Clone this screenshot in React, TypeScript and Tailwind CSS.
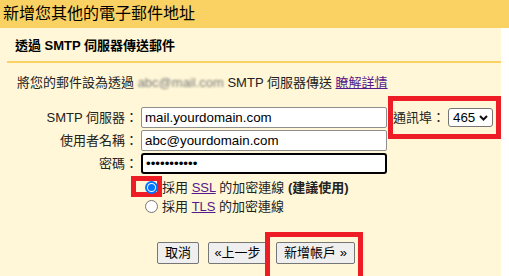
import React from "react";

const font = { fontFamily: '"Liberation Sans", Arial, "Noto Sans CJK TC", sans-serif' };

function Field({ label, value, type = "text", focused = false }: { label: string; value: string; type?: string; focused?: boolean }) {
  return (
    <>
      <div className="h-[21px] flex items-center justify-end text-[13px] text-[#222] pr-[0px]">{label}</div>
      <input
        type={type}
        readOnly
        defaultValue={value}
        className={
          "h-[21px] w-[246px] bg-white px-[3px] text-[13.33px] text-black outline-none " +
          (focused ? "border-2 border-black rounded-[3px]" : "border border-[#8f8f8f] rounded-[2px]")
        }
        style={font}
      />
    </>
  );
}

export default function App() {
  return (
    <div className="relative w-[509px] h-[276px] overflow-hidden bg-white text-[#222]" style={font}>
      <div className="h-[28px] bg-[#fad163] pl-[3px] text-[16px] leading-[28px] text-black">新增您其他的電子郵件地址</div>
      <div className="w-[501px] h-[248px] bg-[#fff7d7]">
        <div className="pl-[15px] pt-[10px] text-[13px] leading-[16px] font-bold text-black">透過 SMTP 伺服器傳送郵件</div>
        <div className="ml-[7px] mt-[7px] h-[2px] bg-[#fad163]" />
        <div className="pl-[17px] mt-[12px] text-[13px] leading-[16px] whitespace-nowrap">
          將您的郵件設為透過{" "}
          <span className="inline-block blur-[1.2px] text-[#7a7a7a]">abc@mail.com</span>{" "}
          SMTP 伺服器傳送{" "}
          <span className="text-[#551a8b] underline">瞭解詳情</span>
        </div>
        <div className="mt-[16px] flex items-start">
          <div className="grid grid-cols-[138px_246px] gap-x-[3px] gap-y-[2px]">
            <Field label="SMTP 伺服器：" value="mail.yourdomain.com" />
            <Field label="使用者名稱：" value="abc@yourdomain.com" />
            <Field label="密碼：" value="12345678901" type="password" focused />
          </div>
          <div className="ml-[6px] h-[21px] flex items-center text-[13px]">
            <span>通訊埠：</span>
            <div className="ml-[3px] h-[19px] w-[45px] bg-white border border-[#767676] rounded-[3px] flex items-center justify-between pl-[4px] pr-[4px] text-[13.33px] text-black">
              <span>465</span>
              <svg width="9" height="6" viewBox="0 0 9 6">
                <path d="M1 1 L4.5 4.5 L8 1" fill="none" stroke="#111" strokeWidth="2" />
              </svg>
            </div>
          </div>
        </div>
        <div className="mt-[4px] flex flex-col text-[13px]">
          <div className="h-[19px] flex items-center pl-[145px]">
            <span className="relative z-10 w-[13px] h-[13px] rounded-full border-2 border-[#0075ff] bg-white flex items-center justify-center">
              <span className="w-[7px] h-[7px] rounded-full bg-[#0075ff]" />
            </span>
            <span className="ml-[4px] whitespace-nowrap">
              採用 <span className="text-[#551a8b] underline">SSL</span> 的加密連線 <b>(建議使用)</b>
            </span>
          </div>
          <div className="h-[19px] flex items-center pl-[145px]">
            <span className="w-[13px] h-[13px] rounded-full border border-[#767676] bg-white" />
            <span className="ml-[4px] whitespace-nowrap">
              採用 <span className="text-[#551a8b] underline">TLS</span> 的加密連線
            </span>
          </div>
        </div>
        <div className="mt-[26px] pl-[157px] flex gap-[9px] text-[13px] text-black">
          <button className="h-[22px] w-[42px] bg-[#efefef] border border-[#767676] rounded-[2px]">取消</button>
          <button className="h-[22px] w-[59px] bg-[#efefef] border border-[#767676] rounded-[2px]">«上一步</button>
          <button className="h-[22px] w-[79px] bg-[#efefef] border border-[#767676] rounded-[2px]">新增帳戶 »</button>
        </div>
      </div>
      <div className="absolute left-[388px] top-[96px] w-[113px] h-[43px] border-[5px] border-[#ee1c25]" />
      <div className="absolute left-[131px] top-[176px] w-[31px] h-[21px] border-[5px] border-[#ee1c25]" />
      <div className="absolute left-[265px] top-[232px] w-[98px] h-[50px] border-[5px] border-[#ee1c25]" />
    </div>
  );
}
